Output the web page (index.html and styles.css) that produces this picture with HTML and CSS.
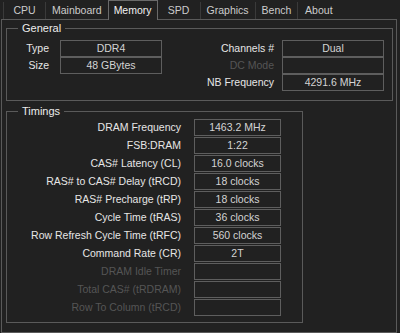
FILE: index.html
```html
<!DOCTYPE html>
<html lang="en">
<head>
    <meta charset="UTF-8">
    <title>CPU-Z - Memory</title>
    <link rel="stylesheet" href="styles.css">
</head>
<body>

    <!-- Tab strip -->
    <nav class="tabs">
        <span class="tab">CPU</span>
        <span class="tab">Mainboard</span>
        <span class="tab active">Memory</span>
        <span class="tab">SPD</span>
        <span class="tab">Graphics</span>
        <span class="tab">Bench</span>
        <span class="tab">About</span>
    </nav>

    <div class="panel">

        <!-- General -->
        <fieldset class="group general">
            <legend>General</legend>
            <div class="general-grid">
                <span class="label">Type</span>
                <span class="value">DDR4</span>
                <span class="label label-right">Channels #</span>
                <span class="value">Dual</span>

                <span class="label">Size</span>
                <span class="value">48 GBytes</span>
                <span class="label label-right disabled">DC Mode</span>
                <span class="value"></span>

                <span></span>
                <span></span>
                <span class="label label-right">NB Frequency</span>
                <span class="value">4291.6 MHz</span>
            </div>
        </fieldset>

        <!-- Timings -->
        <fieldset class="group timings">
            <legend>Timings</legend>
            <div class="timing-grid">
                <span class="label">DRAM Frequency</span>
                <span class="value">1463.2 MHz</span>
                <span class="label">FSB:DRAM</span>
                <span class="value">1:22</span>
                <span class="label">CAS# Latency (CL)</span>
                <span class="value">16.0 clocks</span>
                <span class="label">RAS# to CAS# Delay (tRCD)</span>
                <span class="value">18 clocks</span>
                <span class="label">RAS# Precharge (tRP)</span>
                <span class="value">18 clocks</span>
                <span class="label">Cycle Time (tRAS)</span>
                <span class="value">36 clocks</span>
                <span class="label">Row Refresh Cycle Time (tRFC)</span>
                <span class="value">560 clocks</span>
                <span class="label">Command Rate (CR)</span>
                <span class="value">2T</span>
                <span class="label disabled">DRAM Idle Timer</span>
                <span class="value"></span>
                <span class="label disabled">Total CAS# (tRDRAM)</span>
                <span class="value"></span>
                <span class="label disabled">Row To Column (tRCD)</span>
                <span class="value"></span>
            </div>
        </fieldset>

    </div>

</body>
</html>
```

FILE: styles.css
```css
/* Reset */
* {
    margin: 0;
    padding: 0;
    box-sizing: border-box;
}

body {
    width: 400px;
    height: 333px;
    overflow: hidden;
    background: #212121;
    color: #e4e4e4;
    font: 10.5px "Liberation Sans", Arial, sans-serif;
}

/* Tab strip */
.tabs {
    display: flex;
    align-items: flex-end;
    height: 19px;
    padding-left: 3px;
}

.tab {
    height: 17px;
    min-width: 42px;
    padding: 0 6px;
    line-height: 16px;
    text-align: center;
    color: #cccccc;
    border-left: 1px solid #3a3a3a;
}

.tab.active {
    position: relative;
    z-index: 1;
    height: 20px;
    margin-bottom: -1px;
    padding: 0 5px;
    line-height: 18px;
    color: #f2f2f2;
    background: #212121;
    border: 1px solid #6a6a6a;
    border-bottom: none;
}

.tab.active + .tab {
    border-left: none;
}

/* Main panel */
.panel {
    height: 314px;
    margin: 0 3px 0 1px;
    padding: 1px 3px 0 4px;
    border: 1px solid #5a5a5a;
}

/* Group boxes */
.group {
    min-width: 0;
    border: 1px solid #5a5a5a;
}

.group legend {
    margin-left: 11px;
    padding: 0 4px;
    line-height: 14px;
    font-size: 11px;
    color: #ececec;
}

.general {
    height: 80px;
}

.timings {
    width: 297px;
    height: 219px;
    margin-top: 3px;
}

/* Rows */
.label {
    line-height: 17px;
    text-align: right;
    white-space: nowrap;
    color: #e6e6e6;
}

.label.disabled {
    color: #555555;
}

.value {
    height: 17px;
    line-height: 15px;
    text-align: center;
    color: #d4d4d4;
    border: 1px solid #5e5e5e;
}

.general-grid {
    display: grid;
    grid-template-columns: 53px 102px 1fr 102px;
    grid-auto-rows: 17px;
    padding: 5px 8px 0 0;
}

.general-grid .label {
    padding-right: 11px;
}

.general-grid .label-right {
    padding-right: 8px;
}

.timing-grid {
    display: grid;
    grid-template-columns: 174px 87px;
    grid-auto-rows: 17px;
    column-gap: 13px;
    row-gap: 1px;
    padding-top: 1px;
}
```
